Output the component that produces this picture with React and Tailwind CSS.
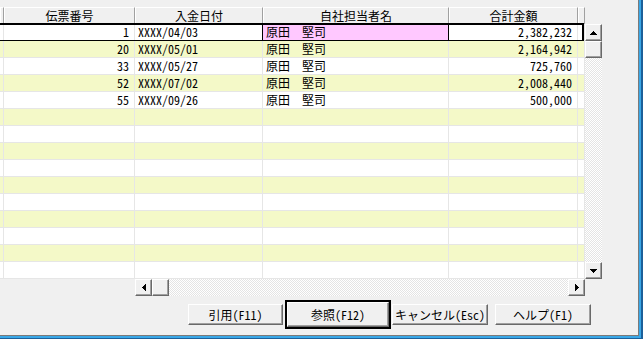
import React from "react";

const FONT = "font-['Noto_Sans_Mono_CJK_JP','Noto_Sans_CJK_JP',monospace]";
const W = [4, 131, 128, 186, 129, 7];

const bevel =
  "bg-[#f0f0f0] border border-t-white border-l-white border-r-[#696969] border-b-[#696969] shadow-[inset_-1px_-1px_0_#a0a0a0]";

const checker =
  "bg-[repeating-conic-gradient(#ffffff_0%_25%,#e4e4e4_0%_50%)] bg-[length:2px_2px]";

function Tri({ dir }) {
  const rows = [
    [3, 1],
    [2, 3],
    [1, 5],
    [0, 7],
  ];
  if (dir === "up" || dir === "down") {
    const r = dir === "up" ? rows : [...rows].reverse();
    return (
      <svg width="7" height="4" viewBox="0 0 7 4" shapeRendering="crispEdges">
        {r.map(([x, w], i) => (
          <rect key={i} x={x} y={i} width={w} height="1" fill="#000" />
        ))}
      </svg>
    );
  }
  const r = dir === "left" ? rows : [...rows].reverse();
  return (
    <svg width="4" height="7" viewBox="0 0 4 7" shapeRendering="crispEdges">
      {r.map(([y, h], i) => (
        <rect key={i} x={i} y={y} width="1" height={h} fill="#000" />
      ))}
    </svg>
  );
}

function SBtn({ dir }) {
  return (
    <div className={`w-[17px] h-[17px] shrink-0 flex items-center justify-center ${bevel}`}>
      {dir ? <Tri dir={dir} /> : null}
    </div>
  );
}

const data = [
  ["1", "XXXX/04/03", "原田　堅司", "2,382,232"],
  ["20", "XXXX/05/01", "原田　堅司", "2,164,942"],
  ["33", "XXXX/05/27", "原田　堅司", "725,760"],
  ["52", "XXXX/07/02", "原田　堅司", "2,008,440"],
  ["55", "XXXX/09/26", "原田　堅司", "500,000"],
];

const headers = ["", "伝票番号", "入金日付", "自社担当者名", "合計金額", ""];

function Row({ i, r }) {
  const bg = i % 2 === 1 ? "bg-[#f4f9c8]" : "bg-white";
  const sel = i === 0;
  const cells = r ? ["", r[0], r[1], r[2], r[3], ""] : ["", "", "", "", "", ""];
  return (
    <div className={`relative flex h-[17px] ${bg}`}>
      {cells.map((c, j) => {
        let cls = "border-r-[#e6e6e6]";
        if (sel && (j === 2 || j === 3)) cls = "border-r-black";
        const pink = sel && j === 3 ? "bg-[#ffc8ff]" : "";
        const align =
          j === 1 || j === 4 ? "justify-end pr-[5px]" : "justify-start pl-[3px]";
        return (
          <div
            key={j}
            style={{ width: W[j] }}
            className={`shrink-0 h-full flex items-center border-r border-b border-b-[#e6e6e6] ${cls} ${pink} ${align} whitespace-pre overflow-hidden`}
          >
            {c}
          </div>
        );
      })}
      {sel ? (
        <div className="absolute left-[-2px] top-[-1px] w-[586px] h-[19px] border-2 border-black pointer-events-none" />
      ) : null}
    </div>
  );
}

function Btn({ children, w }) {
  return (
    <div
      style={{ width: w }}
      className={`h-[21px] shrink-0 flex items-center justify-center ${bevel}`}
    >
      {children}
    </div>
  );
}

export default function App() {
  const rows = Array.from({ length: 15 }, (_, i) => i);
  return (
    <div className={`w-[643px] h-[339px] border-r-2 border-b border-[#1c609a] text-[12px] leading-[16px] text-black ${FONT}`}>
      <div className="h-full border-r-2 border-b-2 border-[#3aa8e8]">
        <div className="h-full border-r border-b border-[#7a7a7a] bg-[#f0f0f0] flex flex-col overflow-hidden">
          <div className="flex pt-[7px]">
            <div className="w-[585px] flex flex-col shrink-0">
              <div className="flex h-[17px]">
                {headers.map((h, j) => (
                  <div
                    key={j}
                    style={{ width: W[j] }}
                    className="shrink-0 h-full flex items-center justify-center bg-[#f0f0f0] border border-t-white border-l-white border-r-[#a0a0a0] border-b-[#a0a0a0] whitespace-pre overflow-hidden"
                  >
                    {h}
                  </div>
                ))}
              </div>
              <div className="flex flex-col">
                {rows.map((i) => (
                  <Row key={i} i={i} r={data[i]} />
                ))}
              </div>
              <div className="flex h-[17px]">
                <div className="w-[135px] shrink-0" />
                <div className="flex flex-1">
                  <SBtn dir="left" />
                  <SBtn />
                  <div className={`flex-1 ${checker}`} />
                  <SBtn dir="right" />
                </div>
              </div>
            </div>
            <div className="w-[17px] shrink-0 flex flex-col pt-[17px]">
              <div className="h-[255px] flex flex-col">
                <SBtn dir="up" />
                <SBtn />
                <div className={`flex-1 ${checker}`} />
                <SBtn dir="down" />
              </div>
            </div>
          </div>
          <div className="flex items-center h-[29px] mt-[4px] pl-[188px]">
            <Btn w={95}>引用(F11)</Btn>
            <div className="ml-[2px] w-[106px] h-[29px] border-2 border-black flex">
              <div className={`flex-1 flex items-center justify-center ${bevel}`}>参照(F12)</div>
            </div>
            <div className="ml-[1px]">
              <Btn w={96}>キャンセル(Esc)</Btn>
            </div>
            <div className="ml-[7px]">
              <Btn w={96}>ヘルプ(F1)</Btn>
            </div>
          </div>
        </div>
      </div>
    </div>
  );
}
